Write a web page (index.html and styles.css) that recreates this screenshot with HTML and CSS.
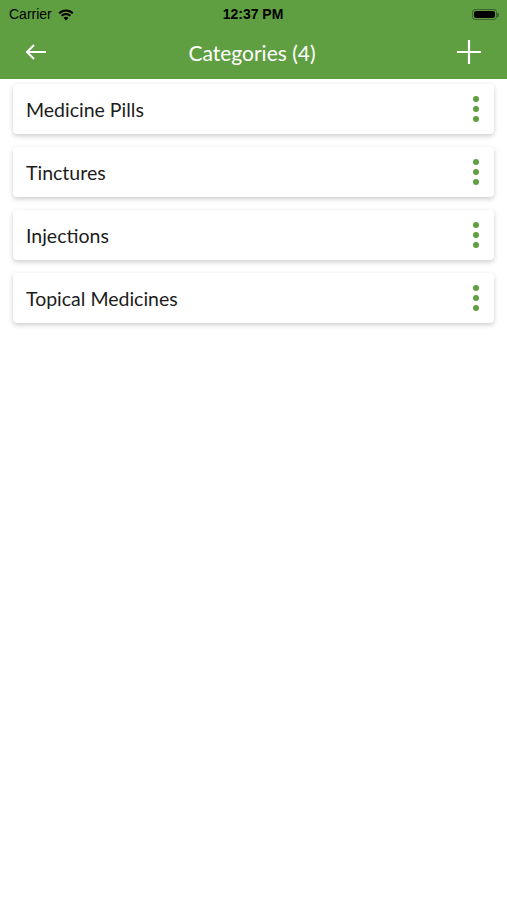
FILE: index.html
```html
<!DOCTYPE html>
<html lang="en">
<head>
    <meta charset="UTF-8">
    <title>Categories</title>
    <link rel="stylesheet" href="styles.css">
</head>
<body>
<div class="top">
    <div class="status">
        <div class="status-left">
            <span>Carrier</span>
            <svg class="wifi" width="18" height="13" viewBox="0 0 18 13">
                <path d="M9 12.5 L6.6 9.9 A3.4 3.4 0 0 1 11.4 9.9 Z" fill="#000"/>
                <path d="M4.6 7.8 A6.3 6.3 0 0 1 13.4 7.8" stroke="#000" stroke-width="2" fill="none"/>
                <path d="M2.2 5.3 A9.6 9.6 0 0 1 15.8 5.3" stroke="#000" stroke-width="2" fill="none"/>
            </svg>
        </div>
        <div class="status-time">12:37 PM</div>
        <div class="status-right">
            <div class="battery"><div class="battery-fill"></div></div>
        </div>
    </div>
    <div class="nav">
        <svg class="nav-icon" width="24" height="24" viewBox="0 0 24 24">
            <path d="M22 12 H3 M10 5 L3 12 L10 19" stroke="#fff" stroke-width="2" fill="none"/>
        </svg>
        <h1 class="nav-title">Categories (4)</h1>
        <svg class="nav-icon" width="26" height="26" viewBox="0 0 26 26">
            <path d="M13 1 V25 M1 13 H25" stroke="#fff" stroke-width="2.2" fill="none"/>
        </svg>
    </div>
</div>

<ul class="list">
    <li class="card"><span>Medicine Pills</span><i class="more"><b></b><b></b><b></b></i></li>
    <li class="card"><span>Tinctures</span><i class="more"><b></b><b></b><b></b></i></li>
    <li class="card"><span>Injections</span><i class="more"><b></b><b></b><b></b></i></li>
    <li class="card"><span>Topical Medicines</span><i class="more"><b></b><b></b><b></b></i></li>
</ul>
</body>
</html>
```

FILE: styles.css
```css
*{ margin: 0; padding: 0; box-sizing: border-box;}
body{ width: 507px; height: 900px; background: #fff; font-family: Lato, "Noto Sans", sans-serif; color: #1c1c1c;}

.top{ background: #5f9f41; height: 79px;}
.status{ height: 28px; display: grid; grid-template-columns: 1fr auto 1fr; align-items: center; padding: 0 10px 0 9px;}
.status-left{ display: flex; align-items: center; gap: 5px; font: 14px "Liberation Sans", Arial, sans-serif; color: #000;}
.status-time{ font: bold 14px "Liberation Sans", Arial, sans-serif; color: #000; text-align: center;}
.status-right{ display: flex; justify-content: flex-end;}
.battery{ width: 25px; height: 11px; border: 1px solid rgba(0,0,0,.35); border-radius: 3px; padding: 1px; position: relative;}
.battery::after{ content: ""; position: absolute; right: -3px; top: 3px; width: 2px; height: 4px; background: rgba(0,0,0,.35); border-radius: 0 1px 1px 0;}
.battery-fill{ width: 100%; height: 100%; background: #000; border-radius: 2px;}

.nav{ height: 48px; display: flex; align-items: center; justify-content: space-between; padding: 0 25px 0 24px;}
.nav-title{ font: 21px Lato, sans-serif; color: #fff; flex: 1; text-align: center;}

.list{ list-style: none; padding: 5px 13px; display: flex; flex-direction: column; gap: 13px;}
.card{ height: 50px; background: #fff; border-radius: 4px; box-shadow: 0 2px 5px rgba(0,0,0,.2); display: flex; align-items: center; justify-content: space-between; padding: 0 15px 0 13px;}
.card span{ font-size: 19.5px;}
.more{ display: flex; flex-direction: column; gap: 4px;}
.more b{ width: 6px; height: 6px; border-radius: 50%; background: #5f9f41;}
```
